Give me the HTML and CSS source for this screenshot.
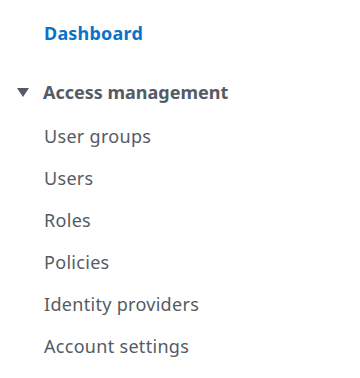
FILE: index.html
```html
<!DOCTYPE html>
<html lang="en">
<head>
    <meta charset="UTF-8">
    <meta name="viewport" content="width=device-width, initial-scale=1.0">
    <title>IAM</title>
    <link rel="stylesheet" href="styles.css">
</head>
<body>
    <nav class="side_nav">
        <a class="nav_top" href="#">Dashboard</a>
        <div class="nav_group">
            <div class="group_tit">
                <svg class="caret" width="12" height="9" viewBox="0 0 12 9"><polygon points="0,0 12,0 6,9" fill="#545b64"/></svg>
                <span>Access management</span>
            </div>
            <ul class="group_list">
                <li><a href="#">User groups</a></li>
                <li><a href="#">Users</a></li>
                <li><a href="#">Roles</a></li>
                <li><a href="#">Policies</a></li>
                <li><a href="#">Identity providers</a></li>
                <li><a href="#">Account settings</a></li>
            </ul>
        </div>
    </nav>
</body>
</html>
```

FILE: styles.css
```css
body { margin: 0; background: #fff; font-family: "Noto Sans", sans-serif; font-size: 18px; }
.side_nav { padding: 20px 0 0 44px; }
.side_nav a { text-decoration: none; }
.nav_top { display: block; line-height: 26px; font-weight: 700; color: #0a72c9; letter-spacing: 0.2px; }
.nav_group { margin-top: 33px; }
.group_tit { display: flex; align-items: center; margin-left: -27px; gap: 14px; line-height: 26px;
    font-weight: 700; color: #545b64; }
.group_list { list-style: none; margin: 0; padding: 2px 0 0; }
.group_list li { margin-top: 17px; line-height: 25px; }
.group_list a { color: #545b64; letter-spacing: 0.3px; }
```
